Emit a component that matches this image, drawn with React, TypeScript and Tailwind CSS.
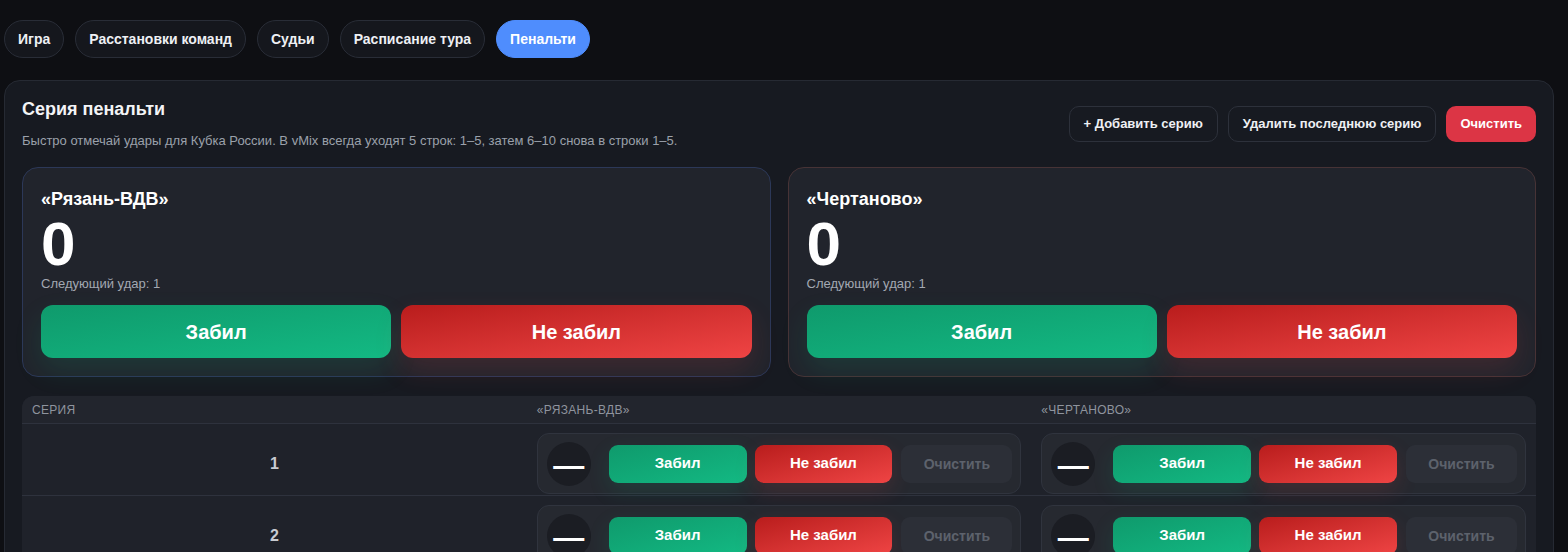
import { useState } from "react"

const tabs = ["Игра", "Расстановки команд", "Судьи", "Расписание тура", "Пенальти"]

const teams = [
  { name: "«Рязань-ВДВ»", border: "border-[#2c3858]" },
  { name: "«Чертаново»", border: "border-[#473336]" },
]

const series = [1, 2, 3, 4, 5]

function TeamCard({ name, border }: { name: string; border: string }) {
  return (
    <div className={`rounded-2xl border ${border} bg-[#21242c] px-[18px] pt-[20px] pb-[18px]`}>
      <div className="text-lg font-bold leading-[22px] text-white">{name}</div>
      <div className="mt-[10px] text-[62px] font-bold leading-[48px] text-white">0</div>
      <div className="mt-[6px] text-[13px] text-[#a3a8b2]">Следующий удар: 1</div>
      <div className="mt-[12px] grid grid-cols-2 gap-[10px]">
        <button className="h-[53px] rounded-xl bg-gradient-to-br from-[#0f9a6c] to-[#13b983] text-xl font-bold text-white shadow-[0_12px_28px_rgba(16,185,129,0.14)]">
          Забил
        </button>
        <button className="h-[53px] rounded-xl bg-gradient-to-br from-[#b91c1c] to-[#ef4444] text-xl font-bold text-white shadow-[0_12px_28px_rgba(239,68,68,0.14)]">
          Не забил
        </button>
      </div>
    </div>
  )
}

function KickCell() {
  return (
    <div className="flex h-[61px] items-center rounded-xl border border-[#30343e] bg-[#262930] pl-[9px] pr-2">
      <div className="flex h-11 w-11 shrink-0 items-center justify-center rounded-full bg-[#1b1d23]">
        <span className="mt-1 text-[31px] font-bold leading-none text-white">—</span>
      </div>
      <div className="ml-[18px] flex flex-1 gap-2">
        <button className="h-[38px] flex-1 rounded-[9px] bg-gradient-to-br from-[#0f9a6c] to-[#13b983] text-[15px] font-bold text-white shadow-[0_8px_22px_rgba(16,185,129,0.14)]">
          Забил
        </button>
        <button className="h-[38px] flex-1 rounded-[9px] bg-gradient-to-br from-[#b91c1c] to-[#ef4444] text-[15px] font-bold text-white shadow-[0_8px_22px_rgba(239,68,68,0.14)]">
          Не забил
        </button>
        <button className="ml-px h-[38px] w-[111px] rounded-[9px] bg-[#2c2f37] text-sm font-bold text-[#5d626c]">
          Очистить
        </button>
      </div>
    </div>
  )
}

export default function App() {
  const [active, setActive] = useState("Пенальти")

  return (
    <div className="min-h-screen bg-[#0e0f13] pl-1 pr-[14px] pt-5 font-['Liberation_Sans',Arial,sans-serif] text-white">
      {/* Tabs */}
      <div className="flex gap-[11px]">
        {tabs.map((t) => (
          <button
            key={t}
            onClick={() => setActive(t)}
            className={
              t === active
                ? "h-[38px] rounded-full border border-[#4f8dfd] bg-[#4f8dfd] px-[13px] text-sm font-bold text-white"
                : "h-[38px] rounded-full border border-[#292d37] bg-[#15171d] px-[13px] text-sm font-bold text-[#eef0f4]"
            }
          >
            {t}
          </button>
        ))}
      </div>

      {/* Penalty panel */}
      <div className="mt-[22px] rounded-2xl border border-[#262a33] bg-[#171a21] px-[17px] pt-4 pb-6">
        <div className="flex items-center justify-between">
          <div>
            <h2 className="text-lg font-bold leading-6 text-[#f3f4f6]">Серия пенальти</h2>
            <p className="mt-[10px] text-[13px] text-[#9ba1ab]">
              Быстро отмечай удары для Кубка России. В vMix всегда уходят 5 строк: 1–5, затем 6–10 снова в строки 1–5.
            </p>
          </div>
          <div className="flex gap-[10px]">
            <button className="h-9 rounded-[10px] border border-[#2d313b] bg-[#171a21] px-[14px] text-[13px] font-bold text-[#eef0f4]">
              + Добавить серию
            </button>
            <button className="h-9 rounded-[10px] border border-[#2d313b] bg-[#171a21] px-[14px] text-[13px] font-bold text-[#eef0f4]">
              Удалить последнюю серию
            </button>
            <button className="h-9 rounded-[10px] bg-[#dc3545] px-[14px] text-[13px] font-bold text-white">
              Очистить
            </button>
          </div>
        </div>

        <div className="mt-4 grid grid-cols-2 gap-[17px]">
          {teams.map((t) => (
            <TeamCard key={t.name} name={t.name} border={t.border} />
          ))}
        </div>

        {/* Series table */}
        <div className="mt-[19px] overflow-hidden rounded-xl bg-[#1f222a]">
          <div className="grid h-7 grid-cols-3 items-center border-b border-[#2e323d] bg-[#22252d] text-xs uppercase tracking-wide text-[#8f949e]">
            <div className="px-[10px]">Серия</div>
            <div className="px-[10px]">«Рязань-ВДВ»</div>
            <div className="px-[10px]">«Чертаново»</div>
          </div>
          {series.map((n) => (
            <div key={n} className="grid grid-cols-3 items-center border-b border-[#2e323d] pt-[9px] pb-px">
              <div className="text-center text-base font-bold text-[#c8cbd1]">{n}</div>
              <div className="px-[10px]">
                <KickCell />
              </div>
              <div className="px-[10px]">
                <KickCell />
              </div>
            </div>
          ))}
        </div>
      </div>
    </div>
  )
}
